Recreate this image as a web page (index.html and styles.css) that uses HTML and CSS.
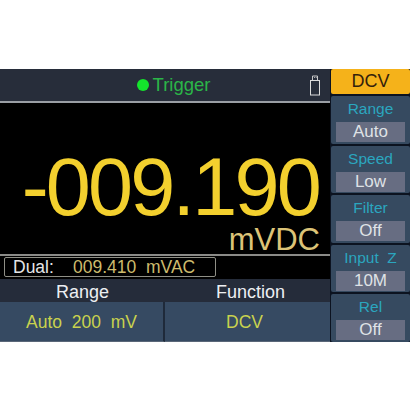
FILE: index.html
```html
<!DOCTYPE html>
<html lang="en">
<head>
<meta charset="utf-8">
<title>Multimeter</title>
<link rel="stylesheet" href="styles.css">
</head>
<body>
<div class="screen">
  <div class="left">
    <div class="top">
      <div class="trigger"><span class="dot"></span><span>Trigger</span></div>
      <svg class="usb" width="12" height="21" viewBox="0 0 12 21" aria-hidden="true">
        <path d="M3.5 5.5V1h5v4.500M5 2.500h.8M6.800 2.500h.8" fill="none" stroke="#c9c9c9" stroke-width="1"/>
        <rect x="1.500" y="5.500" width="9" height="14.500" fill="none" stroke="#dcdcdc" stroke-width="1"/>
      </svg>
    </div>
    <div class="main">
      <div class="value">-009.190</div>
      <div class="unit">mVDC</div>
    </div>
    <div class="dual">
      <div class="dual-box"><span class="dual-label">Dual:</span><span class="dual-value">009.410&nbsp; mVAC</span></div>
    </div>
    <div class="info">
      <div class="head">Range</div>
      <div class="head">Function</div>
      <div class="cell">Auto&nbsp; 200&nbsp; mV</div>
      <div class="cell">DCV</div>
    </div>
  </div>
  <div class="side">
    <div class="btn-active">DCV</div>
    <div class="btn"><div class="btn-title">Range</div><div class="btn-val">Auto</div></div>
    <div class="btn"><div class="btn-title">Speed</div><div class="btn-val">Low</div></div>
    <div class="btn"><div class="btn-title">Filter</div><div class="btn-val">Off</div></div>
    <div class="btn"><div class="btn-title">Input&nbsp; Z</div><div class="btn-val">10M</div></div>
    <div class="btn"><div class="btn-title">Rel</div><div class="btn-val">Off</div></div>
  </div>
</div>
</body>
</html>
```
FILE: styles.css
```css
* { box-sizing: border-box; }
html, body { margin: 0; background: #fff; }
body { width: 410px; height: 410px; padding-top: 69px; font-family: "Liberation Sans", Arial, sans-serif; overflow: hidden; }
.screen { display: flex; height: 273px; width: 410px; background: #0c1320; }
.left { width: 330px; display: flex; flex-direction: column; }
.top { height: 34px; display: flex; align-items: center; justify-content: center; position: relative; background: #272d3a; border-bottom: 2px solid #9a9ea4; }
.trigger { display: flex; align-items: center; gap: 4px; color: #2bb548; font-size: 18.500px; margin-left: 17px; margin-top: -1px; }
.dot { width: 12px; height: 12px; border-radius: 50%; background: #14e52c; }
.usb { position: absolute; left: 309px; top: 6px; }
.main { height: 153px; background: #000; display: flex; flex-direction: column; border-bottom: 2px solid #8b8b88; align-items: flex-end; }
.value { color: #f3d02e; font-size: 81px; line-height: 64px; letter-spacing: -2.800px; margin-top: 52px; margin-right: 11px; white-space: nowrap; }
.unit { color: #dcc377; font-size: 31px; line-height: 30px; margin-right: 10px; margin-top: 6px; }
.dual { height: 23px; background: #000; padding: 1px 0 0 4px; }
.dual-box { width: 212px; height: 20px; border: 1px solid #8f8f86; border-radius: 2px; display: flex; align-items: center; font-size: 17.500px; padding-left: 8px; }
.dual-label { color: #e6e6e6; width: 60px; }
.dual-value { color: #cdbb6d; white-space: nowrap; }
.info { flex: 1; display: grid; grid-template-columns: 165px 165px; grid-template-rows: 23px 40px; }
.head { background: #252c3a; color: #eceff2; font-size: 18px; display: flex; align-items: center; justify-content: center; padding-top: 3px; }
.head:nth-child(2) { padding-left: 6px; }
.cell { background: #364a62; color: #c9d24e; font-size: 17.500px; display: flex; align-items: center; justify-content: center; padding-top: 2px; border-right: 2px solid #1f2a3a; border-bottom: 1px solid #5a6778; }
.cell:last-child { border-right: 0; padding-right: 6px; }
.side { width: 80px; display: flex; flex-direction: column; gap: 2px; padding-left: 1px; }
.btn-active { height: 25px; background: #f5b21a; color: #33210c; font-size: 18px; display: flex; align-items: center; justify-content: center; border-radius: 2px; }
.btn { flex: 1; background: #364a60; border-radius: 2px; display: flex; flex-direction: column; align-items: center; }
.btn-title { color: #2ba6bf; font-size: 15.500px; line-height: 26px; white-space: nowrap; }
.btn-val { width: 69px; height: 20px; background: #676d82; color: #dfe2e6; font-size: 17px; line-height: 20px; text-align: center; }
```
